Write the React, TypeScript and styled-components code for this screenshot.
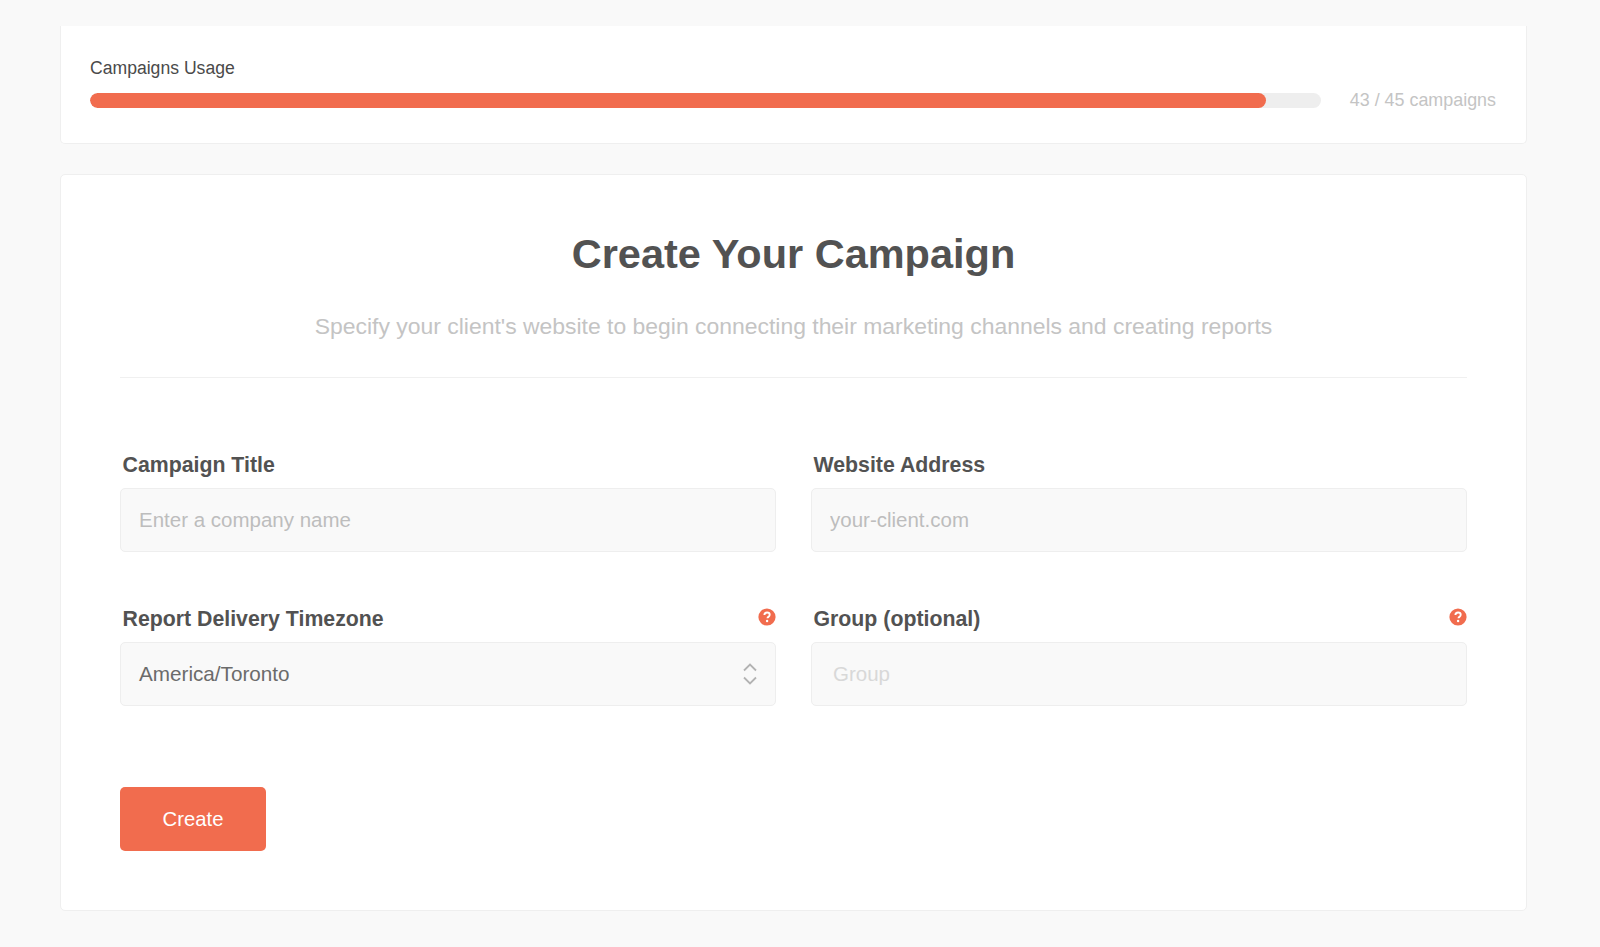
import React from "react";
import styled, { createGlobalStyle } from "styled-components";

const GlobalStyle = createGlobalStyle`
  html, body {
    margin: 0;
    padding: 0;
    background: #f9f9f9;
    font-family: "Liberation Sans", Arial, sans-serif;
  }
  * {
    box-sizing: border-box;
  }
`;

function HelpIcon() {
  return (
    <HelpSvg width="18" height="18" viewBox="0 0 18 18">
      <circle cx="9" cy="9" r="8.6" fill="#f16c4e" />
      <path
        d="M6.4 7.1c0-1.6 1.1-2.6 2.7-2.6s2.6 1 2.6 2.3c0 1-.6 1.6-1.3 2.1-.6.4-.9.7-.9 1.4"
        fill="none"
        stroke="#fff"
        strokeWidth="1.9"
      />
      <circle cx="9.1" cy="13" r="1.2" fill="#fff" />
    </HelpSvg>
  );
}

function SelectArrows() {
  return (
    <svg width="14" height="22" viewBox="0 0 14 22" fill="none" stroke="#b3b3b3" strokeWidth="1.8">
      <path d="M1 7.5 L7 1.5 L13 7.5" />
      <path d="M1 14.5 L7 20.5 L13 14.5" />
    </svg>
  );
}

function App() {
  const used = 43;
  const total = 45;
  return (
    <Page>
      <GlobalStyle />
      <UsageCard>
        <UsageTitle>Campaigns Usage</UsageTitle>
        <UsageRow>
          <Track>
            <Fill style={{ width: `${(used / total) * 100}%` }} />
          </Track>
          <UsageCount>
            {used} / {total} campaigns
          </UsageCount>
        </UsageRow>
      </UsageCard>
      <FormCard>
        <Title>Create Your Campaign</Title>
        <Subtitle>
          Specify your client's website to begin connecting their marketing channels and creating
          reports
        </Subtitle>
        <Divider />
        <FormGrid>
          <Field>
            <LabelRow>
              <Label>Campaign Title</Label>
            </LabelRow>
            <Input placeholder="Enter a company name" />
          </Field>
          <Field>
            <LabelRow>
              <Label>Website Address</Label>
            </LabelRow>
            <Input placeholder="your-client.com" />
          </Field>
          <Field>
            <LabelRow>
              <Label>Report Delivery Timezone</Label>
              <HelpIcon />
            </LabelRow>
            <SelectBox>
              America/Toronto
              <SelectArrows />
            </SelectBox>
          </Field>
          <Field>
            <LabelRow>
              <Label>Group (optional)</Label>
              <HelpIcon />
            </LabelRow>
            <GroupInput placeholder="Group" />
          </Field>
        </FormGrid>
        <CreateButton>Create</CreateButton>
      </FormCard>
    </Page>
  );
}

export default App;

const Page = styled.div`
  width: 1600px;
  height: 947px;
  overflow: hidden;
  padding: 26px 73px 0 60px;
`;

const UsageCard = styled.section`
  height: 118px;
  padding: 31px 30px 0 29px;
  background: #fff;
  border: 1px solid #efefef;
  border-top: 0;
  border-radius: 0 0 5px 5px;
`;

const UsageTitle = styled.div`
  font-size: 17.6px;
  line-height: 22px;
  color: #4a4a4a;
`;

const UsageRow = styled.div`
  display: flex;
  align-items: center;
  gap: 29px;
  margin-top: 11px;
`;

const Track = styled.div`
  width: 1231px;
  height: 15px;
  background: #eeeeee;
  border-radius: 8px;
  overflow: hidden;
`;

const Fill = styled.div`
  height: 100%;
  background: #f16c4e;
  border-radius: 8px;
`;

const UsageCount = styled.span`
  font-size: 17.9px;
  color: #c4c4c4;
  white-space: nowrap;
`;

const FormCard = styled.section`
  height: 737px;
  margin-top: 30px;
  padding: 55px 59px 0;
  background: #fff;
  border: 1px solid #efefef;
  border-radius: 5px;
`;

const Title = styled.h1`
  margin: 0;
  font-size: 41.5px;
  line-height: 48px;
  font-weight: 700;
  text-align: center;
  color: #525252;
`;

const Subtitle = styled.p`
  margin: 34px 0 0;
  font-size: 22.93px;
  line-height: 28px;
  font-weight: 400;
  text-align: center;
  color: #c4c4c4;
`;

const Divider = styled.hr`
  margin: 37px 0 0;
  border: 0;
  border-top: 1px solid #f0f0f0;
`;

const FormGrid = styled.div`
  display: grid;
  grid-template-columns: 656px 656px;
  column-gap: 35px;
  row-gap: 54px;
  margin-top: 74px;
`;

const Field = styled.div`
  display: flex;
  flex-direction: column;
`;

const LabelRow = styled.div`
  display: flex;
  justify-content: space-between;
  align-items: center;
  height: 26px;
  padding-left: 2.5px;
  margin-bottom: 10px;
`;

const Label = styled.label`
  font-size: 21.3px;
  font-weight: 700;
  color: #525252;
`;

const HelpSvg = styled.svg`
  margin-bottom: 4px;
`;

const Input = styled.input`
  width: 100%;
  height: 64px;
  padding: 0 18px;
  background: #f9f9f9;
  border: 1px solid #eeeeee;
  border-radius: 5px;
  outline: none;
  font-family: inherit;
  font-size: 20.5px;
  color: #6b6b6b;
  &::placeholder {
    color: #bdbdbd;
    opacity: 1;
  }
`;

const GroupInput = styled(Input)`
  padding: 0 21px;
  &::placeholder {
    color: #d8d8d8;
  }
`;

const SelectBox = styled.div`
  display: flex;
  justify-content: space-between;
  align-items: center;
  height: 64px;
  padding: 0 18px;
  background: #f9f9f9;
  border: 1px solid #eeeeee;
  border-radius: 5px;
  font-size: 20.7px;
  color: #6b6b6b;
`;

const CreateButton = styled.button`
  display: block;
  width: 146px;
  height: 64px;
  margin-top: 81px;
  background: #f16c4e;
  border: 0;
  border-radius: 5px;
  font-family: inherit;
  font-size: 20.3px;
  color: #fff;
`;
